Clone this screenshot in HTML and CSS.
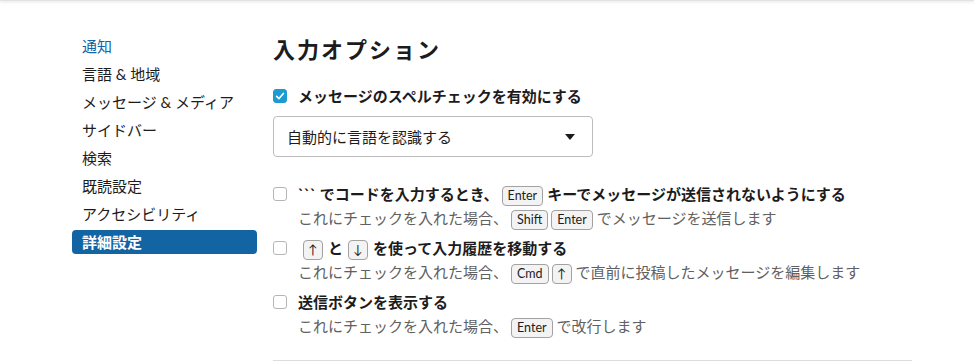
FILE: index.html
```html
<!DOCTYPE html>
<html lang="ja">
<head>
<meta charset="utf-8">
<link rel="stylesheet" href="styles.css">
</head>
<body>
<div class="topshadow"></div>
<div class="page">
  <nav class="sidebar">
    <div class="nav-item link">通知</div>
    <div class="nav-item">言語 &amp; 地域</div>
    <div class="nav-item">メッセージ &amp; メディア</div>
    <div class="nav-item">サイドバー</div>
    <div class="nav-item">検索</div>
    <div class="nav-item">既読設定</div>
    <div class="nav-item">アクセシビリティ</div>
    <div class="nav-item active">詳細設定</div>
  </nav>
  <main class="main">
    <h1 class="title">入力オプション</h1>
    <label class="check-row">
      <span class="box checked"><svg viewBox="0 0 14 14" width="14" height="14"><path d="M3.6 7.3 L6 9.6 L10.4 4.4" fill="none" stroke="#fff" stroke-width="1.6" stroke-linecap="round" stroke-linejoin="round"/></svg></span>
      <span class="label">メッセージのスペルチェックを有効にする</span>
    </label>
    <div class="select">
      <span>自動的に言語を認識する</span>
      <span class="caret"></span>
    </div>
    <div class="option">
      <div class="check-row">
        <span class="box"></span>
        <span class="label">``` でコードを入力するとき、<kbd>Enter</kbd>キーでメッセージが送信されないようにする</span>
      </div>
      <div class="desc">これにチェックを入れた場合、<kbd>Shift</kbd><kbd class="join">Enter</kbd>でメッセージを送信します</div>
    </div>
    <div class="option">
      <div class="check-row">
        <span class="box"></span>
        <span class="label"><kbd class="arrow">↑</kbd>と<kbd class="arrow">↓</kbd>を使って入力履歴を移動する</span>
      </div>
      <div class="desc">これにチェックを入れた場合、<kbd>Cmd</kbd><kbd class="arrow join">↑</kbd>で直前に投稿したメッセージを編集します</div>
    </div>
    <div class="option">
      <div class="check-row">
        <span class="box"></span>
        <span class="label">送信ボタンを表示する</span>
      </div>
      <div class="desc">これにチェックを入れた場合、<kbd>Enter</kbd>で改行します</div>
    </div>
    <hr class="divider">
  </main>
</div>
</body>
</html>
```
FILE: styles.css
```css
* { box-sizing: border-box; }
html, body { margin: 0; padding: 0; background: #fff; }
body {
  font-family: Lato, "Noto Sans CJK JP", sans-serif;
  font-size: 15px;
  color: #1d1c1d;
  overflow: hidden;
}
.topshadow {
  height: 1px;
  background: #e2e2e2;
  box-shadow: 0 1px 3px rgba(0,0,0,0.18);
}
.page {
  display: flex;
  gap: 16px;
  padding: 33px 0 0 72px;
}
.sidebar {
  width: 185px;
  display: flex;
  flex-direction: column;
  gap: 4px;
  flex-shrink: 0;
}
.nav-item {
  height: 24px;
  line-height: 24px;
  padding-left: 10px;
  border-radius: 4px;
}
.nav-item.link { color: #1264a3; }
.nav-item.active { background: #1264a3; color: #fff; font-weight: 700; }
.main {
  width: 639px;
  display: flex;
  flex-direction: column;
}
.title {
  margin: 0 0 18px;
  font-size: 22px;
  line-height: 32px;
  font-weight: 700;
  letter-spacing: 2px;
}
.check-row {
  display: flex;
  align-items: center;
  height: 24px;
  line-height: 24px;
}
.box {
  width: 14px;
  height: 14px;
  border: 1px solid #b5b5b6;
  border-radius: 3px;
  background: #fff;
  margin-right: 11px;
  flex-shrink: 0;
  display: flex;
}
.box.checked { background: #1d9bd1; border-color: #1d9bd1; }
.box.checked svg { margin: -1px; }
.label { font-weight: 700; white-space: nowrap; }
.select {
  margin-top: 8px;
  height: 41px;
  width: 320px;
  border: 1px solid #bcbcbd;
  border-radius: 4px;
  display: flex;
  align-items: center;
  justify-content: space-between;
  padding: 0 17px 0 13px;
  margin-bottom: 25px;
}
.caret {
  width: 0;
  height: 0;
  border-left: 5px solid transparent;
  border-right: 5px solid transparent;
  border-top: 6px solid #1d1c1d;
}
.option { margin-bottom: 6px; }
.desc {
  padding-left: 25px;
  color: #616061;
  line-height: 24px;
  white-space: nowrap;
}
kbd {
  display: inline-block;
  font-family: Lato, "DejaVu Sans", sans-serif;
  font-size: 12.5px;
  font-weight: 400;
  line-height: 18px;
  height: 20px;
  padding: 0 5px;
  border: 1px solid #a2a2a3;
  border-radius: 4px;
  background: #f3f3f3;
  color: #1d1c1d;
  margin: 0 4px 0 3px;
  vertical-align: 0;
}
kbd.arrow { padding: 0 3px; min-width: 20px; text-align: center; margin: 0 5px; }
kbd.join { margin-left: -1px; }
kbd.arrow.join { margin-left: -1px; }
.desc kbd.arrow { margin-right: 4px; }
.divider {
  margin: 16px 0 0;
  border: 0;
  border-top: 1px solid #dddddd;
  width: 639px;
}
```
